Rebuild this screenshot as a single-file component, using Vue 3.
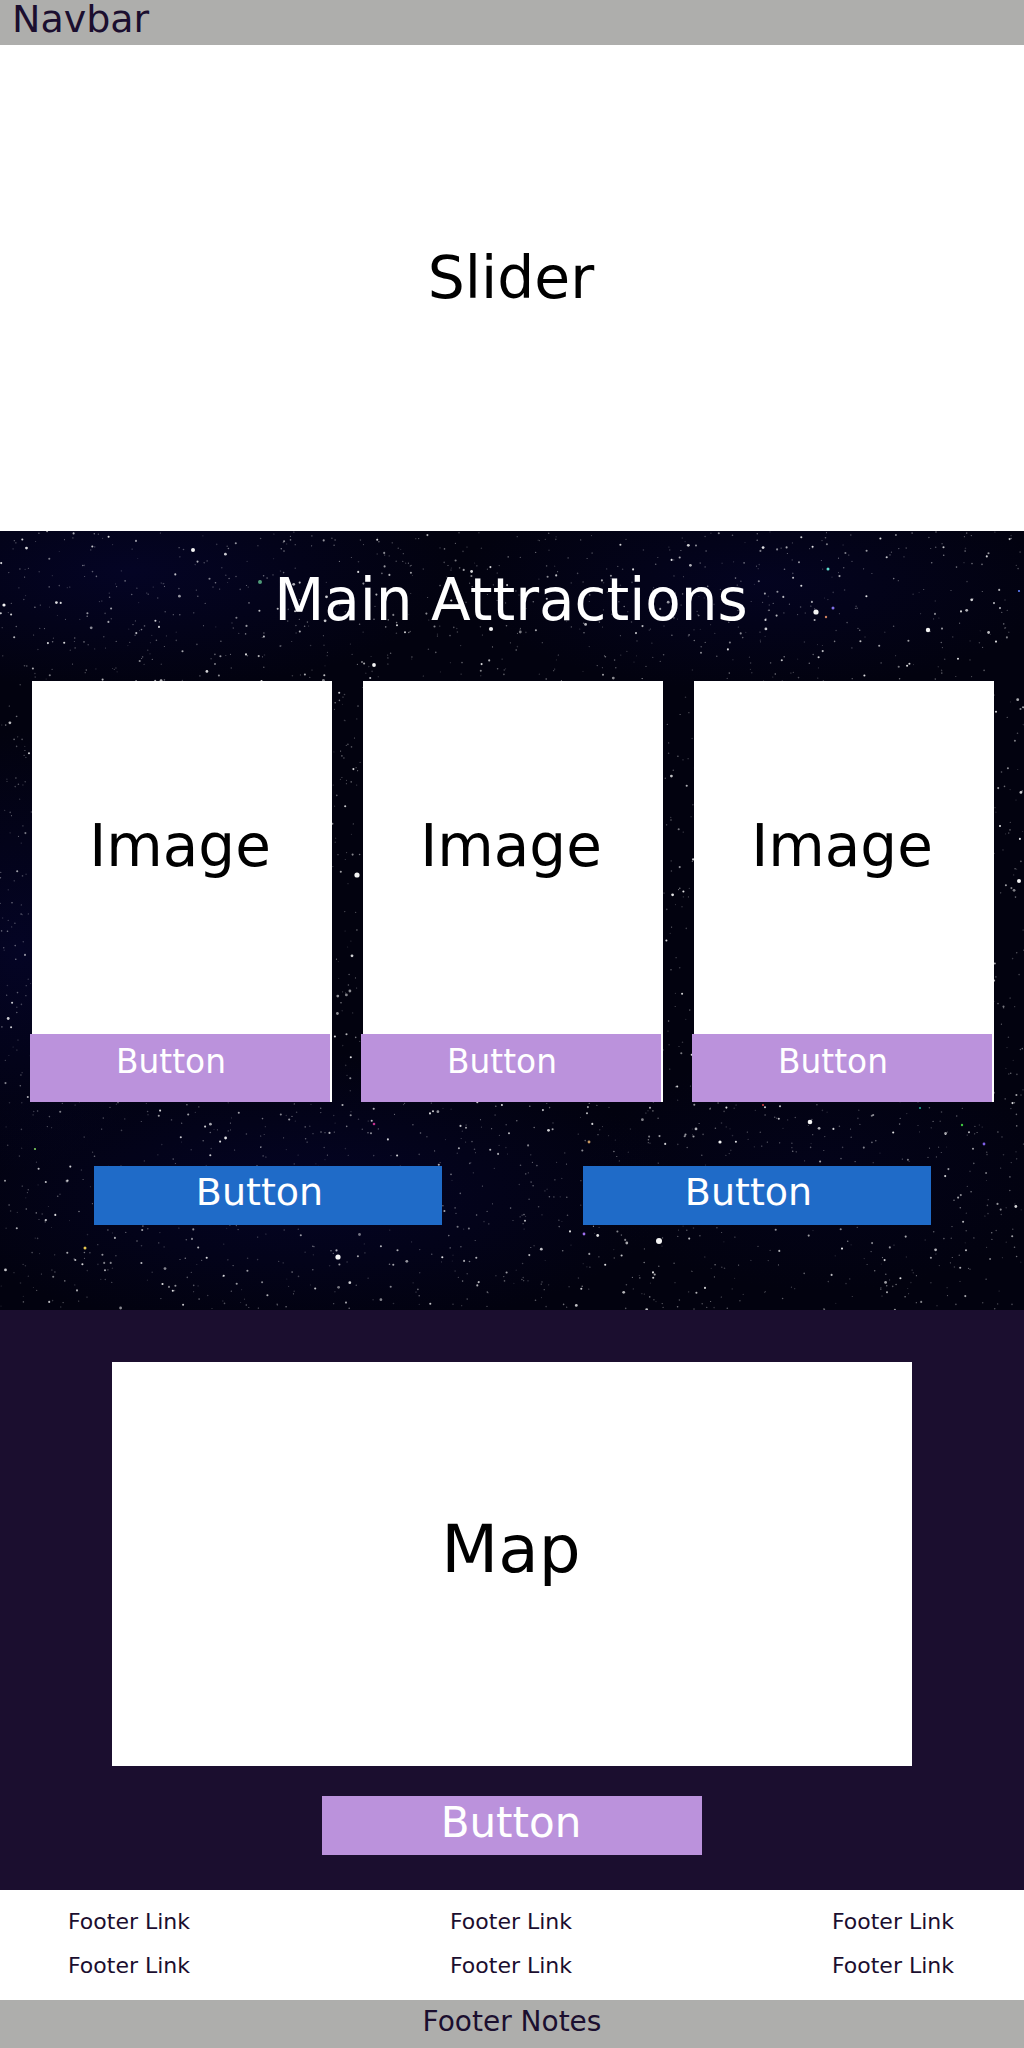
<script setup>
function rng(seed) {
  let s = seed
  return () => {
    s = (s * 1664525 + 1013904223) % 4294967296
    return s / 4294967296
  }
}
const r = rng(20240611)
const W = 1024
const H = 779
const stars = []
for (let i = 0; i < 4200; i++) {
  const k = r()
  stars.push({
    x: +(r() * W).toFixed(1),
    y: +(r() * H).toFixed(1),
    r: k > 0.97 ? 1.4 : k > 0.8 ? 1.05 : k > 0.45 ? 0.8 : 0.6,
    o: k > 0.8 ? 0.45 + r() * 0.45 : 0.15 + r() * 0.32
  })
}
const bright = [
  [4, 74, 1.6], [193, 19, 2], [491, 98, 2.1], [374, 134, 1.9], [357, 344, 2.6],
  [659, 710, 3], [338, 726, 2.6], [810, 591, 2.3], [1019, 350, 2], [720, 611, 1.6],
  [816, 81, 2.6], [928, 99, 2.2]
].map(([x, y, rad]) => ({ x, y, r: rad }))
const tinted = [
  [260, 51, 2, '#4f9a78'], [85, 717, 1.5, '#e8c850'], [374, 593, 1.3, '#c0308c'],
  [962, 594, 1.2, '#40c840'], [984, 613, 1.4, '#8060e8'], [584, 703, 1.4, '#a070f0'],
  [589, 611, 1.4, '#c89860'], [35, 618, 1.1, '#80d060'], [1019, 60, 1.1, '#6080ff'],
  [283, 650, 1.1, '#ff5060'], [920, 577, 1.1, '#20a890'], [763, 574, 1, '#e04040'],
  [828, 38, 1.5, '#60e0d0'], [833, 77, 1.5, '#8070e8'], [826, 86, 1.2, '#d08060']
].map(([x, y, rad, fill]) => ({ x, y, r: rad, fill }))
const cards = [0, 1, 2]
const footerColumns = [0, 1, 2]
</script>

<template>
  <div class="page">
    <header class="navbar">Navbar</header>
    <section class="slider">Slider</section>

    <section class="attractions">
      <svg class="sky" :viewBox="`0 0 ${W} ${H}`" width="1024" height="779" aria-hidden="true">
        <defs>
          <radialGradient id="blue-a" cx="50%" cy="50%" r="50%">
            <stop offset="0%" stop-color="#06063a" stop-opacity="0.5" />
            <stop offset="100%" stop-color="#06063a" stop-opacity="0" />
          </radialGradient>
        </defs>
        <ellipse cx="130" cy="40" rx="330" ry="120" fill="url(#blue-a)" />
        <ellipse cx="760" cy="50" rx="300" ry="110" fill="url(#blue-a)" opacity="0.8" />
        <ellipse cx="20" cy="420" rx="170" ry="220" fill="url(#blue-a)" />
        <ellipse cx="300" cy="660" rx="380" ry="140" fill="url(#blue-a)" />
        <ellipse cx="820" cy="640" rx="240" ry="120" fill="url(#blue-a)" opacity="0.5" />
        <circle v-for="(s, i) in stars" :key="i" :cx="s.x" :cy="s.y" :r="s.r" fill="#ffffff" :opacity="s.o" />
        <circle v-for="(s, i) in bright" :key="'b' + i" :cx="s.x" :cy="s.y" :r="s.r" fill="#f4f4f4" />
        <circle v-for="(s, i) in tinted" :key="'t' + i" :cx="s.x" :cy="s.y" :r="s.r" :fill="s.fill" />
      </svg>
      <div class="attractions-inner">
        <h2 class="attractions-title">Main Attractions</h2>
        <div class="cards">
          <article v-for="c in cards" :key="c" class="card">
            <div class="card-image">Image</div>
            <button class="card-button" type="button">Button</button>
          </article>
        </div>
        <div class="actions">
          <button class="action" type="button">Button</button>
          <button class="action" type="button">Button</button>
        </div>
      </div>
    </section>

    <section class="location">
      <div class="map">Map</div>
      <button class="map-button" type="button">Button</button>
    </section>

    <nav class="footer-links">
      <div v-for="c in footerColumns" :key="c" class="footer-column">
        <a class="footer-link">Footer Link</a>
        <a class="footer-link">Footer Link</a>
      </div>
    </nav>
    <footer class="footer-notes">Footer Notes</footer>
  </div>
</template>

<style>
html, body { margin: 0; padding: 0; }
</style>

<style scoped>
.page {
  width: 1024px;
  height: 2048px;
  display: flex;
  flex-direction: column;
  font-family: "DejaVu Sans", sans-serif;
  color: #1b0e2f;
}
.navbar {
  height: 45px;
  background: #aeaeac;
  font-size: 38px;
  line-height: 38px;
  padding-left: 12px;
}
.slider {
  height: 486px;
  box-sizing: border-box;
  background: #fff;
  color: #000;
  font-size: 58.4px;
  line-height: 68px;
  display: flex;
  align-items: center;
  justify-content: center;
  padding: 0 2px 20px 0;
}
.attractions {
  position: relative;
  height: 779px;
  background: #02020f;
  overflow: hidden;
}
.sky {
  position: absolute;
  inset: 0;
  display: block;
}
.attractions-inner {
  position: relative;
  display: flex;
  flex-direction: column;
}
.attractions-title {
  margin: 36px 0 0;
  height: 114px;
  padding-right: 2px;
  font-size: 58px;
  font-weight: 400;
  line-height: 67px;
  color: #fff;
  text-align: center;
}
.cards {
  display: flex;
  gap: 31px;
  padding-left: 32px;
}
.card {
  width: 300px;
  height: 421px;
  background: #fff;
  display: flex;
  flex-direction: column;
}
.card-image {
  height: 353px;
  color: #000;
  font-size: 58px;
  line-height: 68px;
  display: flex;
  align-items: center;
  justify-content: center;
  padding: 0 4px 23px 0;
  box-sizing: border-box;
}
.card-button {
  width: 300px;
  height: 68px;
  margin-left: -2px;
  border: 0;
  padding: 0 18px 12px 0;
  background: #bb92dc;
  color: #fff;
  font: 400 32.8px/1 "DejaVu Sans", sans-serif;
}
.actions {
  display: flex;
  gap: 141px;
  padding: 64px 0 0 94px;
}
.action {
  width: 348px;
  height: 59px;
  border: 0;
  padding: 0 17px 7px 0;
  background: #1f6bc8;
  color: #fff;
  font: 400 38px/1 "DejaVu Sans", sans-serif;
}
.location {
  height: 580px;
  background: #1b0e2f;
  display: flex;
  flex-direction: column;
  align-items: center;
  padding-top: 52px;
  box-sizing: border-box;
}
.map {
  width: 800px;
  height: 404px;
  box-sizing: border-box;
  background: #fff;
  color: #000;
  font-size: 66px;
  line-height: 77px;
  display: flex;
  align-items: center;
  justify-content: center;
  padding: 0 2px 30px 0;
}
.map-button {
  width: 380px;
  height: 59px;
  margin-top: 30px;
  border: 0;
  padding: 0 2px 6px 0;
  background: #bb92dc;
  color: #fff;
  font: 400 42px/1 "DejaVu Sans", sans-serif;
}
.footer-links {
  height: 110px;
  background: #fff;
  display: flex;
  justify-content: space-between;
  padding: 19px 70px 0 68px;
  box-sizing: border-box;
}
.footer-column {
  display: flex;
  flex-direction: column;
  gap: 18px;
}
.footer-link {
  font-size: 22px;
  line-height: 26px;
}
.footer-notes {
  height: 48px;
  background: #aeaeac;
  font-size: 28px;
  line-height: 43px;
  text-align: center;
}
</style>
